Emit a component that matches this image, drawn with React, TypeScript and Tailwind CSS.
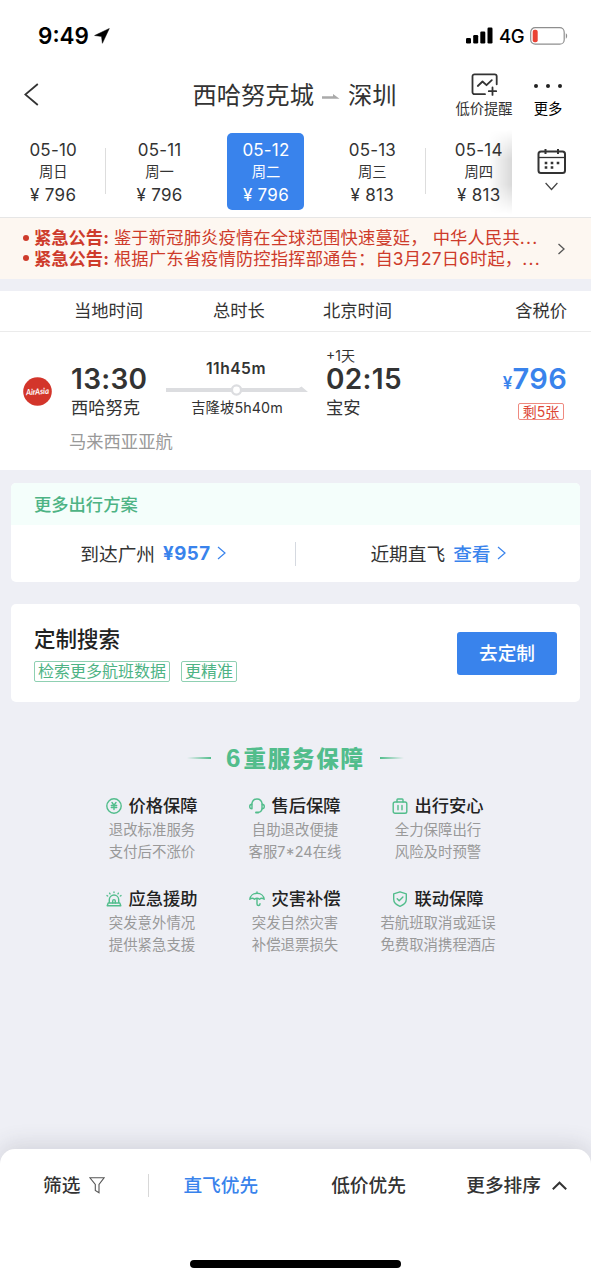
import React from 'react';
import clsx from 'clsx';

const dates = [
  { date: '05-10', day: '周日', price: '796' },
  { date: '05-11', day: '周一', price: '796' },
  { date: '05-12', day: '周二', price: '796' },
  { date: '05-13', day: '周三', price: '813' },
  { date: '05-14', day: '周四', price: '813' },
];

const notices = [
  '鉴于新冠肺炎疫情在全球范围快速蔓延， 中华人民共...',
  '根据广东省疫情防控指挥部通告：自3月27日6时起，...',
];

const stroke = {
  fill: 'none',
  stroke: '#52bd8c',
  strokeWidth: 1.4,
  strokeLinecap: 'round',
  strokeLinejoin: 'round',
} as const;

const YenIcon = () => (
  <svg width="16" height="16" viewBox="0 0 16 16" {...stroke}>
    <circle cx="8" cy="8" r="7.2" />
    <path d="M6 4.5l2 2.7 2-2.7M5.3 7.5h5.4M5.3 9.5h5.4M8 7.3v4.2" />
  </svg>
);

const HeadsetIcon = () => (
  <svg width="16" height="16" viewBox="0 0 16 16" {...stroke}>
    <path d="M2.8 6.2C3.2 3 5.3 1 8 1s4.8 2 5.2 5.2M13.2 10.6c-.5 2-1.700 3.400-3.500 3.800" />
    <path d="M3 6.300v4.400C1.500 10.700.7 9.700.7 8.500S1.500 6.300 3 6.300zM13 6.300v4.400c1.500 0 2.300-1 2.300-2.200S14.500 6.300 13 6.300z" />
    <path d="M7 14.600h2.200" strokeWidth="2" />
  </svg>
);

const LuggageIcon = () => (
  <svg width="16" height="16" viewBox="0 0 16 16" {...stroke}>
    <rect x="1.200" y="4" width="13.600" height="11.200" rx="1.800" />
    <path d="M5 4V1.800C5 1.300 5.300 1 5.800 1h4.400c.5 0 .8.300.8.800V4M6 7.500v4.200M10 7.500v4.200" />
  </svg>
);

const AlarmIcon = () => (
  <svg width="16" height="16" viewBox="0 0 16 16" {...stroke}>
    <path d="M3.300 12V8.700a4.700 4.700 0 0 1 9.400 0V12M1.200 14.800l1-2.800h11.600l1 2.800z" />
    <path d="M6.700 12V9.900a1.300 1.300 0 0 1 2.600 0V12M8 1v.6M3.600 2.200l.4.600M12.400 2.200l-.4.600M1 4.600l.7.400M15 4.600l-.7.400" />
  </svg>
);

const UmbrellaIcon = () => (
  <svg width="16" height="16" viewBox="0 0 16 16" {...stroke}>
    <path d="M.8 8.300C1.200 4.800 4.200 2.300 8 2.300s6.800 2.500 7.200 6c-1.500-1.200-3.400-1.200-4.700 0-1.500-1.200-3.500-1.200-5 0-1.300-1.200-3.200-1.200-4.700 0zM8 1v1.300M8 7.600V13a1.500 1.500 0 0 0 3 0v-.4" />
  </svg>
);

const ShieldIcon = () => (
  <svg width="16" height="16" viewBox="0 0 16 16" {...stroke}>
    <path d="M8 .8l6.300 2.100v5.400c0 3.200-2.400 5.500-6.300 7-3.900-1.500-6.300-3.800-6.300-7V2.900z" />
    <path d="M5.200 7.800l2 2 3.700-3.700" />
  </svg>
);

const services = [
  { icon: YenIcon, title: '价格保障', lines: ['退改标准服务', '支付后不涨价'] },
  { icon: HeadsetIcon, title: '售后保障', lines: ['自助退改便捷', '客服7*24在线'] },
  { icon: LuggageIcon, title: '出行安心', lines: ['全力保障出行', '风险及时预警'] },
  { icon: AlarmIcon, title: '应急援助', lines: ['突发意外情况', '提供紧急支援'] },
  { icon: UmbrellaIcon, title: '灾害补偿', lines: ['突发自然灾害', '补偿退票损失'] },
  { icon: ShieldIcon, title: '联动保障', lines: ['若航班取消或延误', '免费取消携程酒店'] },
];

const StatusBar = () => (
  <div className="flex h-[71px] items-center justify-between pl-[38px] pr-6 text-black">
    <div className="flex items-center gap-[5px]">
      <span className="pt-px text-[22.5px] font-semibold leading-none">9:49</span>
      <svg width="16" height="16" viewBox="0 0 16 16">
        <path d="M15.300.5L.6 7.500l6.900.9.900 6.900z" fill="#000" stroke="#000" strokeWidth=".5" strokeLinejoin="round" />
      </svg>
    </div>
    <div className="flex items-center">
      <svg width="27" height="17" viewBox="0 0 27 17">
        <rect x="0" y="11" width="5" height="5.500" rx="1.200" />
        <rect x="7.200" y="8" width="5" height="8.500" rx="1.200" />
        <rect x="14.300" y="4.500" width="5" height="12" rx="1.200" />
        <rect x="21.500" y="0.500" width="5" height="16" rx="1.200" />
      </svg>
      <span className="ml-[6px] w-[25px] pt-px text-[18.500px] font-medium leading-none tracking-[-0.3px]">4G</span>
      <svg className="-mr-px ml-[6px]" width="38" height="18" viewBox="0 0 38 18">
        <rect x=".7" y=".7" width="33.500" height="16.500" rx="4.500" fill="none" stroke="#8e8e8e" strokeWidth="1.200" />
        <rect x="2.700" y="2.700" width="5" height="12.500" rx="2" fill="#ea4335" />
        <path d="M35.800 6.300c1.800.7 1.800 4.700 0 5.400z" fill="#8e8e8e" />
      </svg>
    </div>
  </div>
);

const NavBar = () => (
  <div className="flex h-[59px] text-[#333]">
    <div className="flex w-[180px] items-start pl-6 pt-3">
      <svg width="15" height="23" viewBox="0 0 15 23" fill="none" stroke="#333" strokeWidth="1.800">
        <path d="M13.800 1L1.300 11.500 13.800 22" />
      </svg>
    </div>
    <div className="flex h-[48px] w-[229px] items-center justify-center gap-2 whitespace-nowrap text-[24.3px] leading-none">
      <span>西哈努克城</span>
      <svg className="mt-[2px]" width="18" height="5" viewBox="0 0 18 5">
        <path d="M0 2.300h11V0l6.500 4.800H0z" fill="#aaa" />
      </svg>
      <span>深圳</span>
    </div>
    <div className="flex flex-1 pl-[46px]">
      <div className="flex w-[58px] flex-col items-center">
        <svg className="ml-[2px] mt-[2px]" width="28" height="23" viewBox="0 0 28 23" fill="none" stroke="#333" strokeWidth="1.800" strokeLinecap="round" strokeLinejoin="round">
          <path d="M14 21.200H3.500a2 2 0 0 1-2-2V3.300a2 2 0 0 1 2-2h20.200a2 2 0 0 1 2 2v8" />
          <path d="M6.800 13l4.700-4.500 4 3.700 5.300-5M21.500 14.500v7.400M17.800 18.200h7.400" />
        </svg>
        <span className="mt-[5px] whitespace-nowrap text-[14.300px] leading-[16px]">低价提醒</span>
      </div>
      <div className="ml-[20px] flex w-[30px] flex-col items-center">
        <div className="flex h-[30px] items-center gap-2">
          <i className="size-1 rounded-full bg-[#222]" />
          <i className="size-1 rounded-full bg-[#222]" />
          <i className="size-1 rounded-full bg-[#222]" />
        </div>
        <span className="whitespace-nowrap text-[14.300px] leading-[16px] text-black">更多</span>
      </div>
    </div>
  </div>
);

const DateStrip = () => (
  <div className="flex h-[88px] border-b border-[#e6e6e6]">
    <div className="relative flex w-[512px] overflow-hidden">
      {dates.map((d, i) => (
        <div key={d.date} className="flex w-[106.400px] flex-none items-start">
          <div
            className={clsx(
              'mx-auto mt-[3px] flex h-[77px] w-[77px] flex-col items-center rounded-[5px] pt-[5px] text-[17px]',
              i === 2 ? 'bg-[#3983ec] text-white' : 'text-[#333]'
            )}
          >
            <span className="leading-[24px] tracking-[0.200px]">{d.date}</span>
            <span className="text-[14.300px] leading-[20px]">{d.day}</span>
            <span className="leading-[27px] tracking-[0.300px]">¥ {d.price}</span>
          </div>
          {(i === 0 || i === 3) && <div className="-ml-px mt-[18px] h-[46px] w-px bg-[#ddd]" />}
        </div>
      ))}
      <div className="absolute inset-y-0 right-0 h-[84px] w-6 bg-gradient-to-r from-black/0 to-black/15 [mask-image:linear-gradient(transparent,black_35%,black_65%,transparent)]" />
    </div>
    <div className="flex flex-1 flex-col items-center">
      <svg className="mt-[18px]" width="30" height="27" viewBox="0 0 30 27" fill="none" stroke="#333" strokeWidth="2">
        <rect x="1.500" y="3.500" width="26.500" height="21.500" rx="2.500" />
        <path d="M1.500 9.500H28" strokeWidth="1.300" />
        <path d="M8.500 1v5M21 1v5" />
        <path d="M7.700 15h2.600M13.700 15h2.600M19.700 15h2.600M7.700 19.500h2.600M13.700 19.500h2.600" strokeWidth="2.500" />
      </svg>
      <svg className="mt-[7px]" width="13" height="9" viewBox="0 0 13 9" fill="none" stroke="#444" strokeWidth="1.200">
        <path d="M.6 1l5.900 6.500L12.400 1" />
      </svg>
    </div>
  </div>
);

const Notice = () => (
  <div className="flex h-[61px] items-center bg-[#fdf7f1] pl-[23px] text-[#ce3b2b]">
    <div className="w-[534px] pb-px text-[17.300px]">
      {notices.map(text => (
        <div key={text} className="flex h-[20.500px] items-center whitespace-nowrap leading-[21px]">
          <i className="mr-[5px] size-[6px] rounded-full bg-[#ce3b2b]" />
          <b className="mr-[5px] font-bold">紧急公告:</b>
          <span className="tracking-[0.150px]">{text.slice(0, -3)}</span>
          <span className="tracking-[1.200px]">...</span>
        </div>
      ))}
    </div>
    <svg width="9" height="12" viewBox="0 0 9 12" fill="none" stroke="#555" strokeWidth="1.300">
      <path d="M1.500 1l5.500 5-5.500 5" />
    </svg>
  </div>
);

const FlightList = () => (
  <div className="mt-3 bg-white text-[#333]">
    <div className="flex h-[41px] items-center border-b border-[#ebebeb] pl-[74px] pr-6 text-[17.300px] leading-none">
      <span className="w-[139px]">当地时间</span>
      <span className="w-[110px]">总时长</span>
      <span>北京时间</span>
      <span className="ml-auto">含税价</span>
    </div>
    <div className="h-[138px] pl-[23px] pr-6">
      <div className="flex h-[97px]">
        <svg className="mt-[45px]" width="29" height="29" viewBox="0 0 29 29">
          <circle cx="14.500" cy="14.500" r="14.300" fill="#d3352b" />
          <text x="14.500" y="17.500" textAnchor="middle" textLength="23" lengthAdjust="spacingAndGlyphs" fontFamily="Lato, sans-serif" fontStyle="italic" fontWeight="bold" fontSize="8.500" fill="#fff" transform="rotate(-4 14.500 14.500)">
            AirAsia
          </text>
        </svg>
        <div className="ml-[19px] w-[95px] pt-[32px]">
          <div className="text-[28px] font-semibold leading-[30px] tracking-[0.300px]">13:30</div>
          <div className="text-[17.300px] leading-[27px]">西哈努克</div>
        </div>
        <div className="w-[142px] pt-[26px] text-center">
          <div className="-ml-[2px] text-[15.600px] font-semibold leading-[22px] tracking-[0.500px]">11h45m</div>
          <svg className="mt-[4px] block" width="142" height="12" viewBox="0 0 142 12">
            <path d="M0 4h133l2.500-1.500 6.500 5.500H0z" fill="#dcdde0" />
            <circle cx="70.500" cy="6" r="4.600" fill="#fff" stroke="#dcdde0" strokeWidth="2.400" />
          </svg>
          <div className="mt-[3px] text-[14.300px] leading-[18px] tracking-[0.100px]">吉隆坡5h40m</div>
        </div>
        <div className="ml-[18px] pt-[16px]">
          <div className="text-[14px] leading-[16px]">+1天</div>
          <div className="text-[28px] font-semibold leading-[30px] tracking-[0.300px]">02:15</div>
          <div className="text-[17.300px] leading-[27px]">宝安</div>
        </div>
        <div className="ml-auto flex flex-col items-end pt-[32px]">
          <div className="text-[29px] font-semibold leading-[30px] tracking-[0.300px] text-[#3983ec]">
            <span className="text-[17px]">¥</span>796
          </div>
          <div className="mr-[3px] mt-[5px] flex h-[17px] w-[46px] items-center justify-center rounded-[2px] border border-[#ef8a80] text-[14px] leading-none text-[#dc4635]">
            剩5张
          </div>
        </div>
      </div>
      <div className="pl-[46px] text-[17.300px] leading-[26px] text-[#999]">马来西亚亚航</div>
    </div>
  </div>
);

const BlueChevron = () => (
  <svg width="9" height="14" viewBox="0 0 9 14" fill="none" stroke="#3983ec" strokeWidth="1.200">
    <path d="M1 1l7 6-7 6" />
  </svg>
);

const MorePlans = () => (
  <div className="mx-[11px] mt-[13px] overflow-hidden rounded-[5px] bg-white">
    <div className="h-[42px] bg-[#f4fefb] pl-[23px] text-[17.300px] font-medium leading-[43px] text-[#4db384]">更多出行方案</div>
    <div className="flex h-[57px] items-center text-[18.700px] leading-none text-[#333]">
      <div className="flex flex-1 items-center justify-center">
        <span className="pt-[3px]">到达广州</span>
        <span className="ml-2 mr-[6px] pt-[2px] font-bold tracking-[0.500px] text-[#3983ec]">¥957</span>
        <BlueChevron />
      </div>
      <div className="h-6 w-px bg-[#d5d9e0]" />
      <div className="flex flex-1 items-center justify-center">
        <span className="pt-[3px]">近期直飞</span>
        <span className="ml-2 mr-[6px] pt-[3px] font-medium text-[#3983ec]">查看</span>
        <BlueChevron />
      </div>
    </div>
  </div>
);

const CustomSearch = () => (
  <div className="mx-[11px] mt-[22px] flex h-[98px] items-center justify-between rounded-[5px] bg-white px-[23px]">
    <div>
      <div className="text-[21.500px] font-medium leading-[30px] text-[#222]">定制搜索</div>
      <div className="mt-[7px] flex gap-[11px] text-[16px] leading-[19px] text-[#4db384]">
        <span className="w-[136px] rounded-[2px] border border-[#8fd0b2] text-center">检索更多航班数据</span>
        <span className="w-[56px] rounded-[2px] border border-[#8fd0b2] text-center">更精准</span>
      </div>
    </div>
    <button className="h-[43px] w-[100px] rounded-[3px] bg-[#3983ec] pt-[2px] text-[18.700px] font-medium leading-none text-white">去定制</button>
  </div>
);

const Services = () => (
  <div className="mt-[43px] flex flex-col items-center">
    <div className="flex h-[26px] items-center text-[22.500px] font-black leading-none tracking-[1.800px] text-[#52bd8c]">
      <i className="mr-[15px] h-[2px] w-6 bg-gradient-to-r from-transparent to-[#52bd8c]" />
      <span className="whitespace-nowrap">
        <span className="mr-px font-['Liberation_Sans',sans-serif] text-[26px] font-bold">6</span>重服务保障
      </span>
      <i className="ml-[15px] h-[2px] w-6 bg-gradient-to-r from-[#52bd8c] to-transparent" />
    </div>
    <div className="mt-[22px] grid grid-cols-[143px_143px_143px] gap-y-[15px]">
      {services.map(({ icon: Icon, title, lines }) => (
        <div key={title} className="flex h-[78px] flex-col items-center whitespace-nowrap pr-px">
          <div className="flex h-[26px] items-center gap-[6px] text-[17.300px] font-medium leading-none text-[#222]">
            <Icon />
            {title}
          </div>
          <div className="text-center text-[14.400px] leading-[22px] text-[#999]">
            {lines.map(line => (
              <div key={line}>{line}</div>
            ))}
          </div>
        </div>
      ))}
    </div>
  </div>
);

const BottomBar = () => (
  <div className="mt-auto flex h-[130px] flex-col items-center justify-between rounded-t-[15px] bg-white pb-[11px] shadow-[0_-4px_22px_rgba(60,60,80,0.160)]">
    <div className="flex h-[73px] w-full items-center pl-[43px] pr-6 text-[18.700px] font-medium leading-none text-[#333]">
      <span className="pt-[2px]">筛选</span>
      <svg className="ml-[9px]" width="16" height="17" viewBox="0 0 16 17" fill="none" stroke="#555" strokeWidth="1.100">
        <path d="M.9.800h14.200L10 7.500v8.200l-3.700-2.200v-6z" />
      </svg>
      <div className="ml-[43px] h-[23px] w-px bg-[#d8d8d8]" />
      <span className="ml-[34px] pt-[2px] text-[#3983ec]">直飞优先</span>
      <span className="ml-[73px] pt-[2px]">低价优先</span>
      <div className="ml-auto flex items-center gap-[11px]">
        <span className="pt-[2px]">更多排序</span>
        <svg width="15" height="9" viewBox="0 0 15 9" fill="none" stroke="#333" strokeWidth="2">
          <path d="M.8 8.200l6.700-6.500 6.700 6.500" />
        </svg>
      </div>
    </div>
    <div className="h-2 w-[211px] rounded-full bg-black" />
  </div>
);

export default function App() {
  return (
    <div className="flex h-[1279px] w-[591px] flex-col overflow-hidden bg-[#eeeff5] font-['Inter','Noto_Sans_CJK_SC',sans-serif]">
      <div className="bg-white">
        <StatusBar />
        <NavBar />
        <DateStrip />
      </div>
      <Notice />
      <FlightList />
      <MorePlans />
      <CustomSearch />
      <Services />
      <BottomBar />
    </div>
  );
}
